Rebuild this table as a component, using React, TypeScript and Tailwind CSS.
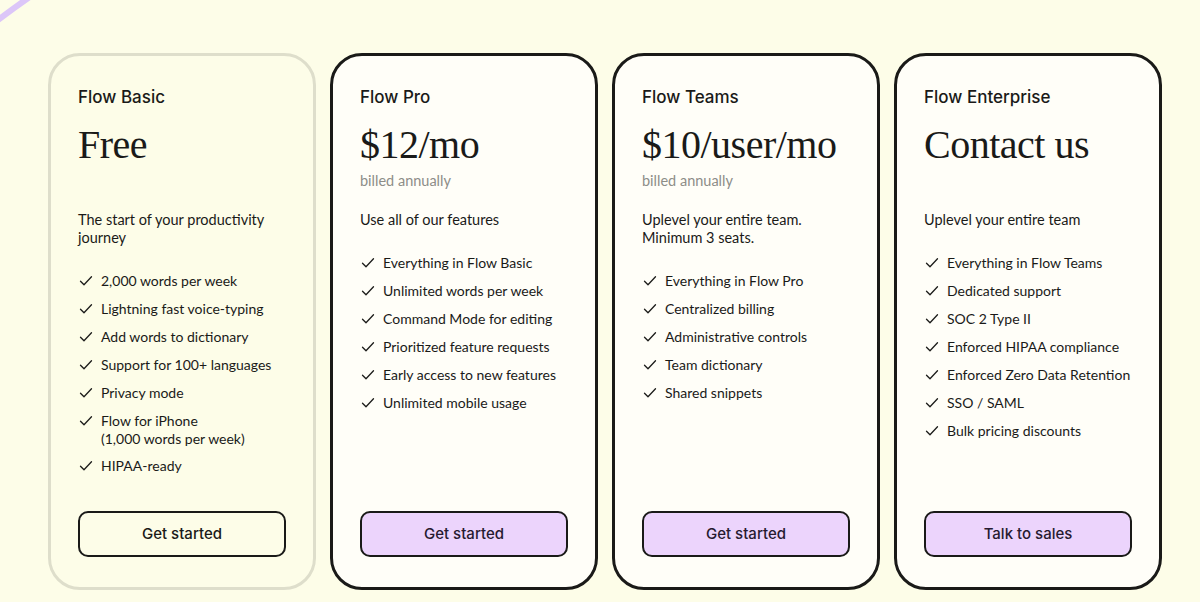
import React from 'react';

type Plan = {
  name: string;
  price: string;
  billed?: boolean;
  description: string[];
  features: string[][];
  cta: string;
  featured: boolean;
};

const PLANS: Plan[] = [
  {
    name: 'Flow Basic',
    price: 'Free',
    description: ['The start of your productivity', 'journey'],
    features: [
      ['2,000 words per week'],
      ['Lightning fast voice-typing'],
      ['Add words to dictionary'],
      ['Support for 100+ languages'],
      ['Privacy mode'],
      ['Flow for iPhone', '(1,000 words per week)'],
      ['HIPAA-ready'],
    ],
    cta: 'Get started',
    featured: false,
  },
  {
    name: 'Flow Pro',
    price: '$12/mo',
    billed: true,
    description: ['Use all of our features'],
    features: [
      ['Everything in Flow Basic'],
      ['Unlimited words per week'],
      ['Command Mode for editing'],
      ['Prioritized feature requests'],
      ['Early access to new features'],
      ['Unlimited mobile usage'],
    ],
    cta: 'Get started',
    featured: true,
  },
  {
    name: 'Flow Teams',
    price: '$10/user/mo',
    billed: true,
    description: ['Uplevel your entire team.', 'Minimum 3 seats.'],
    features: [
      ['Everything in Flow Pro'],
      ['Centralized billing'],
      ['Administrative controls'],
      ['Team dictionary'],
      ['Shared snippets'],
    ],
    cta: 'Get started',
    featured: true,
  },
  {
    name: 'Flow Enterprise',
    price: 'Contact us',
    description: ['Uplevel your entire team'],
    features: [
      ['Everything in Flow Teams'],
      ['Dedicated support'],
      ['SOC 2 Type II'],
      ['Enforced HIPAA compliance'],
      ['Enforced Zero Data Retention'],
      ['SSO / SAML'],
      ['Bulk pricing discounts'],
    ],
    cta: 'Talk to sales',
    featured: true,
  },
];

const INTER = { fontFamily: 'Inter, "Noto Sans", sans-serif' };

function Check() {
  return (
    <svg width="14" height="14" viewBox="0 0 14 14" fill="none" className="mt-[2px] ml-[1px] shrink-0">
      <path d="M1.5 7.2 L5 10.8 L12.5 2.8" stroke="#1c1c1a" strokeWidth="1.3" strokeLinecap="round" strokeLinejoin="round" />
    </svg>
  );
}

function PlanCard({ plan }: { plan: Plan }) {
  return (
    <div
      className={`w-[268px] h-[537px] shrink-0 flex flex-col rounded-[32px] border-[3px] px-[27px] pt-[29px] pb-[30px] ${plan.featured ? 'border-[#1a1a18] bg-[#fffef8]' : 'border-[#dedecb] bg-[#fdfde8]'}`}
    >
      <div className="text-[17px] leading-6 font-medium text-[#1a1a18]" style={INTER}>{plan.name}</div>
      <div className="mt-[12px] text-[40px] leading-[48px] text-[#1a1a18] tracking-[-0.5px]" style={{ fontFamily: '"Liberation Serif", serif' }}>
        {plan.price}
      </div>
      <div className={`mt-[2px] text-[14.5px] leading-5 text-[#8d8d88] ${plan.billed ? '' : 'invisible'}`}>billed annually</div>
      <div className="mt-[20px] text-[14.5px] leading-[18px] text-[#1a1a18]">
        {plan.description.map((l) => (
          <div key={l}>{l}</div>
        ))}
      </div>
      <ul className="mt-[25px] flex flex-col gap-[10px]">
        {plan.features.map((f) => (
          <li key={f[0]} className="flex gap-[8px] text-[14px] leading-[18px] text-[#1a1a18]">
            <Check />
            <div className="whitespace-nowrap">
              {f.map((l) => (
                <div key={l} className="leading-[17px] first:leading-[18px]">{l}</div>
              ))}
            </div>
          </li>
        ))}
      </ul>
      <button
        className={`mt-auto h-[46px] w-full rounded-[10px] border-2 border-[#1a1a18] text-[15px] font-medium ${plan.featured ? 'bg-[#ecd4fc] text-[#261a30]' : 'bg-transparent text-[#1a1a18]'}`}
        style={INTER}
      >
        {plan.cta}
      </button>
    </div>
  );
}

export default function App() {
  return (
    <div className="relative w-[1200px] h-[602px] overflow-hidden bg-[#fdfde8]" style={{ fontFamily: 'Lato, "Noto Sans", sans-serif' }}>
      <svg className="absolute left-0 top-0" width="60" height="40" viewBox="0 0 60 40">
        <path d="M-20 34 Q 5 14 34 -6" stroke="#dcc6f8" strokeWidth="6" fill="none" />
      </svg>
      <div className="flex gap-[14px] pl-[48px] pt-[53px]">
        {PLANS.map((p) => (
          <PlanCard key={p.name} plan={p} />
        ))}
      </div>
    </div>
  );
}
